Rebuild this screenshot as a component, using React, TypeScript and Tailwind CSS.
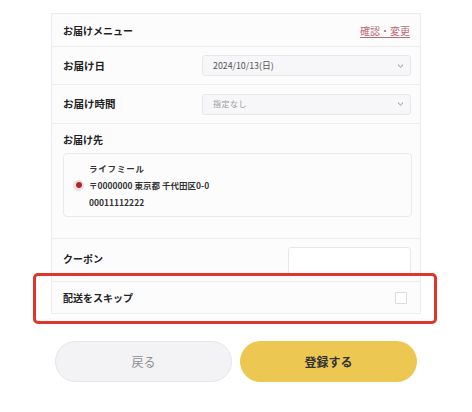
import React from "react";

const font = { fontFamily: '"Noto Sans CJK JP", "Noto Sans", sans-serif' };

function Chevron() {
  return (
    <svg width="7" height="5" viewBox="0 0 7 5" className="absolute right-[6px] top-1/2 -translate-y-1/2">
      <path d="M1 1.2 L3.5 3.6 L6 1.2" fill="none" stroke="#8a8a8e" strokeWidth="1" />
    </svg>
  );
}

export default function App() {
  return (
    <div className="relative w-[472px] h-[412px] bg-white overflow-hidden pt-[13px]" style={font}>
      <div className="ml-[51px] w-[370px] border border-[#eeecee] bg-[#fdfcfd]">
        {/* header */}
        <div className="h-[32px] flex items-center justify-between pl-[11px] pr-[10px]">
          <span className="text-[10px] font-bold text-[#222]">お届けメニュー</span>
          <span className="text-[10px] text-[#b86a73] underline underline-offset-2">確認・変更</span>
        </div>
        {/* date */}
        <div className="h-[38px] border-t border-[#eeecee] flex items-center justify-between pl-[11px] pr-[9px]">
          <span className="text-[10.5px] font-bold text-[#222]">お届け日</span>
          <div className="relative w-[209px] h-[21px] rounded-[3px] border border-[#e8e6ea] bg-[#f7f6f8] flex items-center pl-[10px]">
            <span className="text-[8.8px] text-[#555]">2024/10/13(日)</span>
            <Chevron />
          </div>
        </div>
        {/* time */}
        <div className="h-[39px] border-t border-[#eeecee] flex items-center justify-between pl-[11px] pr-[9px]">
          <span className="text-[10.5px] font-bold text-[#222]">お届け時間</span>
          <div className="relative w-[209px] h-[21px] rounded-[3px] border border-[#e8e6ea] bg-[#f7f6f8] flex items-center pl-[10px]">
            <span className="text-[8px] text-[#9a9a9e] tracking-[0.5px]">指定なし</span>
            <Chevron />
          </div>
        </div>
        {/* address */}
        <div className="h-[115px] border-t border-[#eeecee] pl-[11px] pr-[9px] pt-[9px]">
          <div className="text-[10px] font-bold text-[#222] leading-[14px]">お届け先</div>
          <div className="mt-[6px] h-[64px] w-[349px] rounded-[4px] border border-[#ebe9ec] bg-[#fdfcfd] flex items-center pl-[9px]">
            <div className="w-[11px] h-[11px] rounded-full bg-[#f3e6e8] border border-[#ead8db] flex items-center justify-center">
              <div className="w-[6px] h-[6px] rounded-full bg-[#b3252b]" />
            </div>
            <div className="ml-[5px] flex flex-col text-[8.5px] font-semibold text-[#333] leading-[17px]">
              <span className="tracking-[0.8px]">ライフミール</span>
              <span>〒0000000 東京都 千代田区0-0</span>
              <span>00011112222</span>
            </div>
          </div>
        </div>
        {/* coupon */}
        <div className="h-[43px] border-t border-[#eeecee] flex justify-between pl-[11px] pr-[9px]">
          <span className="mt-[13px] text-[10px] font-bold text-[#222] leading-[14px]">クーポン</span>
          <div className="mt-[8px] w-[123px] h-[28px] rounded-[3px] border border-[#e8e6ea] bg-white" />
        </div>
        {/* skip */}
        <div className="h-[32px] border-t border-[#eeecee] flex items-center justify-between pl-[11px] pr-[13px]">
          <span className="text-[10px] font-bold text-[#222]">配送をスキップ</span>
          <div className="w-[12px] h-[12px] border border-[#dcdcdc] rounded-[1px] bg-white" />
        </div>
      </div>

      {/* buttons */}
      <div className="mt-[27px] ml-[55px] flex gap-[8px]">
        <div className="w-[177px] h-[41px] rounded-full bg-[#f3f3f5] border border-[#e6e6ea] flex items-center justify-center">
          <span className="text-[12px] text-[#8e8e93]">戻る</span>
        </div>
        <div className="w-[177px] h-[41px] rounded-full bg-[#ecc853] flex items-center justify-center">
          <span className="text-[12px] font-bold text-[#333]">登録する</span>
        </div>
      </div>

      {/* red highlight annotation */}
      <div className="absolute left-[33px] top-[273px] w-[404px] h-[51px] border-[3px] border-[#e0352b] rounded-[5px] pointer-events-none" />
    </div>
  );
}
